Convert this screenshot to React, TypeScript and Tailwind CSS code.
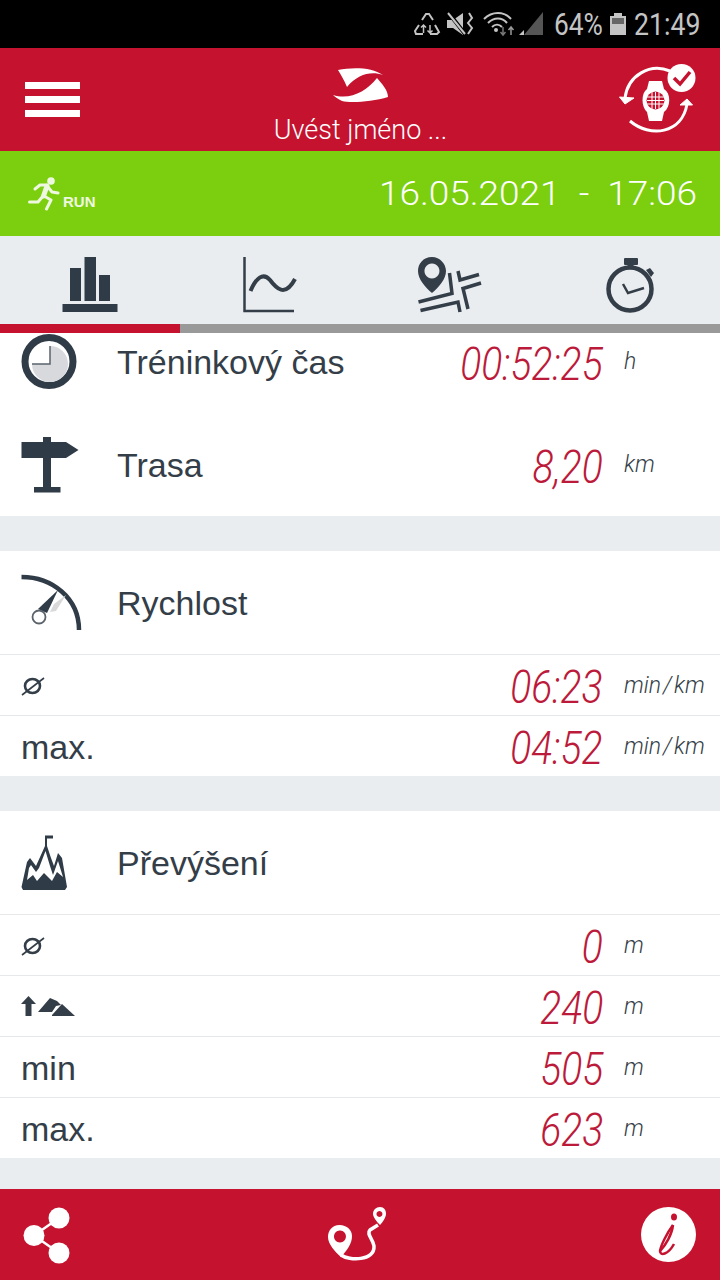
import type { ReactNode } from 'react'

const ARIAL = 'font-["Liberation_Sans",Arial,sans-serif]'

function Diameter() {
  return (
    <svg width="24" height="22" viewBox="0 0 24 22" fill="none" stroke="#343e48">
      <ellipse cx="11.5" cy="11" rx="7.5" ry="7" strokeWidth="2.6" />
      <path d="M1 20 L23 3" strokeWidth="1.6" />
    </svg>
  )
}

function Climb() {
  return (
    <svg width="56" height="22" viewBox="21 996 56 22" fill="#343e48">
      <path d="M28.500 996 L36 1004 L31.500 1004 L31.500 1016 L25.500 1016 L25.500 1004 L21 1004 Z" />
      <path d="M38 1012 L50 998 L57 1001 L61 1005 L56 1006 L52 1012 Z" />
      <path d="M52 1015 L62 1004 L75 1016 L52 1016 Z" />
    </svg>
  )
}

function ClockIcon() {
  return (
    <svg width="58" height="58" viewBox="21 333 58 58">
      <circle cx="49" cy="361.500" r="24" fill="none" stroke="#2f3b47" strokeWidth="7" />
      <path d="M50 346 A18 18 0 1 1 32 364 L50 364 Z" fill="#d8d9dc" />
      <path d="M50 346 L50 364 L32 364" fill="none" stroke="#5a636c" strokeWidth="1.500" />
    </svg>
  )
}

function SignIcon() {
  return (
    <svg width="58" height="56" viewBox="21 437 58 56" fill="#2f3b47">
      <path d="M43 437 H51 V442 H66 L78.500 450 L66 458 H51 V487 H60.500 V492.500 H34 V487 H43 V458 H21.500 V442 H43 Z" />
    </svg>
  )
}

function GaugeIcon() {
  return (
    <svg width="62" height="58" viewBox="21 574 62 58" fill="none">
      <path d="M21.500 577 C52 577 79 598 79 630" stroke="#2f3b47" strokeWidth="4.500" />
      <path d="M58 590 L38 609 L47 613 Z" fill="#2f3b47" />
      <path d="M66 595 L54 604 L50 612 L56 611 Z" fill="#d9d9d9" />
      <circle cx="39" cy="617" r="6.500" fill="#fff" stroke="#5a636c" strokeWidth="1.800" />
    </svg>
  )
}

function PeakIcon() {
  return (
    <svg width="48" height="56" viewBox="21 835 48 56" fill="#2f3b47">
      <path d="M45 835.500 H53 V838.500 H47 V846 L51 858 L54 866 L58 853 L62 858 L67 887 L65 890 H23 L21.500 887 L27 862 L30 858 L36 866 L45 846 Z" />
      <path d="M29 868 L31 865 L36 872 L39 868 L45.500 851 L50 866 L53 875 L58 861 L63 877 L57 872 L52 881 L44 873 L37 881 L33 875 L27 880 Z" fill="#fff" />
    </svg>
  )
}

function Value({ text }: { text: string }) {
  return (
    <div className="mr-[21px] flex-1 pt-[4px] text-right">
      <span className='inline-block origin-right scale-x-[0.85] whitespace-nowrap text-[46px] italic leading-none font-light text-[#bc1a3a] font-["Roboto",sans-serif]'>
        {text}
      </span>
    </div>
  )
}

function Unit({ unit }: { unit: string }) {
  return (
    <span className='w-[96px] shrink-0 pt-[2px] text-[23px] italic font-light text-[#343e48] font-["Roboto",sans-serif]'>
      {unit === 'min/km' ? (
        <>
          min<span className="mx-[2px]">/</span>km
        </>
      ) : (
        unit
      )}
    </span>
  )
}

type Row = { icon?: ReactNode; label?: string; value: string; unit: string }

function StatRow({ icon, label, value, unit }: Row) {
  return (
    <div className="flex h-[61px] items-center border-t border-[#e7e8ea] pl-[21px]">
      <div className={`flex w-[96px] shrink-0 items-center pt-[2px] text-[34px] text-[#343e48] ${ARIAL}`}>
        {label ? <span className="whitespace-nowrap">{label}</span> : icon}
      </div>
      <Value text={value} />
      <Unit unit={unit} />
    </div>
  )
}

function SectionHead({ icon, label, value, unit }: { icon: ReactNode; label: string; value?: string; unit?: string }) {
  return (
    <div className="flex h-[103px] items-center pl-[21px]">
      <div className="flex w-[96px] shrink-0 items-center">{icon}</div>
      <span className={`whitespace-nowrap pt-[2px] text-[34px] text-[#343e48] ${ARIAL}`}>{label}</span>
      {value ? (
        <>
          <Value text={value} />
          <Unit unit={unit ?? ''} />
        </>
      ) : null}
    </div>
  )
}

function StatusBar() {
  return (
    <div className='flex h-[48px] items-center justify-end bg-black pr-[20px] text-[31px] leading-none text-[#c4c4c4] font-["Roboto",sans-serif]'>
      <svg width="130" height="26" viewBox="415 11 130 26" fill="none" className="mr-[10px]">
        <g stroke="#c4c4c4" strokeWidth="2">
          <path d="M423 20 L427 14 H430 L434 20 M436 25 L440 32 L438 34 H431 M424 34 H417 L416 31 L420 25" />
          <path d="M424.500 33 V25 M422 27.500 L424.500 25 L427 27.500 M431 33 V25 M428.500 30.500 L431 33 L433.500 30.500" strokeWidth="1.500" />
        </g>
        <path d="M448 20 H454 L464 13 V35 L454 28 H448 Z" fill="#c4c4c4" />
        <path d="M449 12 L466 34" stroke="#000" strokeWidth="4" />
        <path d="M449 13 L466 34" stroke="#c4c4c4" strokeWidth="2" />
        <path d="M470 13 L473 18 L469 23 L473 28 L469 34" stroke="#c4c4c4" strokeWidth="2" />
        <g stroke="#c4c4c4" strokeWidth="2">
          <path d="M485 19 C493 11 505 11 512 19" />
          <path d="M489 23 C495 17 503 17 508 23" />
          <path d="M493 27 C496 24 500 24 503 27" />
        </g>
        <circle cx="497" cy="30" r="2" fill="#c4c4c4" />
        <path d="M504 27 V35 M501.500 32 L504 35 L506.500 32" stroke="#777" strokeWidth="1.500" />
        <path d="M512 35 V27 M509.500 30 L512 27 L514.500 30" stroke="#999" strokeWidth="1.500" />
        <path d="M544 12 V35 H525 Z" fill="#555" />
        <path d="M520 35 L525 30 V35 Z" fill="#c4c4c4" />
      </svg>
      <span className="inline-block w-[47px] origin-left scale-x-[0.85] whitespace-nowrap">64%</span>
      <svg width="16" height="23" viewBox="610 13 16 23" className="ml-[9px] mr-[8px]">
        <path d="M610 16 H614 V13 H622 V16 H626 V35 H610 Z" fill="#c4c4c4" />
        <rect x="612" y="18" width="12" height="6" fill="#666" />
      </svg>
      <span className="inline-block w-[66px] origin-left scale-x-[0.86] whitespace-nowrap">21:49</span>
    </div>
  )
}

function WatchSync() {
  return (
    <svg width="78" height="72" viewBox="618 63 78 72" fill="none" stroke="#fff">
      <path d="M670 70 C650 62 628 74 625 97" strokeWidth="3" />
      <path d="M619.500 96 L634 97 L625 103 Z" fill="#fff" strokeWidth="1" />
      <path d="M630 120 C650 137 682 133 687 103" strokeWidth="3" />
      <path d="M680 104 L687 98 L692.500 104 Z" fill="#fff" strokeWidth="1" />
      <path d="M649 80 H662 L664 88 C671 92 671 106 664 111 L662 120 H649 L647 111 C641 106 641 92 647 88 Z" fill="#fff" stroke="none" />
      <circle cx="655.500" cy="99.500" r="9" fill="#c5122f" stroke="none" />
      <path d="M647 96 H664 M647 99.500 H664 M647 103 H664 M652 91 V108 M655.500 91 V108 M659 91 V108" stroke="#fff" strokeWidth="1" />
      <circle cx="681.500" cy="77" r="14" fill="#fff" stroke="none" />
      <path d="M674 77 L680 83 L690 71" stroke="#c5122f" strokeWidth="3.500" />
    </svg>
  )
}

function Logo() {
  return (
    <svg width="56" height="36" viewBox="333 67 56 36" fill="#fff">
      <path d="M338 70 C352 67 372 67 383 75 C371 71 358 74 347 87 C344 80 341 75 338 70 Z" />
      <path d="M333 95 C350 100 366 92 377 78 C382 84 388 90 388 97 C372 102 350 103 342 101 C338 99 335 97 333 95 Z" />
    </svg>
  )
}

function Runner() {
  return (
    <svg width="32" height="34" viewBox="28 175 32 34" fill="none" stroke="#eef8e0" strokeWidth="3" strokeLinecap="round" strokeLinejoin="round">
      <circle cx="51" cy="179" r="3.800" fill="#eef8e0" stroke="none" />
      <path d="M47 184 L43.500 194" strokeWidth="5" />
      <path d="M47 183 L40 183 L35 187" />
      <path d="M48 185 L52 190 L58 191" />
      <path d="M43 194 L38 200 L29.500 200" />
      <path d="M44 194 L51 198 L46.500 207" />
    </svg>
  )
}

function Tabs() {
  return (
    <div className="grid h-[88px] grid-cols-4 items-center bg-[#e9edf0] pt-[9px]">
      <div className="flex justify-center">
        <svg width="58" height="56" viewBox="61 257 58 56" fill="#2f3b47">
          <rect x="70" y="268" width="11" height="33" />
          <rect x="84.500" y="257" width="11.500" height="44" />
          <rect x="99" y="275" width="11" height="26" />
          <rect x="62.500" y="304" width="55" height="8" />
        </svg>
      </div>
      <div className="flex justify-center">
        <svg width="56" height="56" viewBox="242 257 56 56" fill="none" stroke="#343e48">
          <path d="M244.500 257 V311 H294" strokeWidth="2.500" />
          <path d="M250.500 291 C256 278 263 272 270 280 C276 288 285 298 295 279" strokeWidth="4" />
        </svg>
      </div>
      <div className="flex justify-center">
        <svg width="66" height="56" viewBox="417 257 66 56" fill="none" stroke="#343e48">
          <path fillRule="evenodd" d="M432 257 C423 257 418 264 418 271 C418 279 425 287 432 293 C439 287 446 279 446 271 C446 264 440 257 432 257 Z M432 263.500 A7.500 7.500 0 1 1 431.900 263.500 Z" fill="#343e48" stroke="none" />
          <path d="M418.500 302 L452 293.500 L449.500 273" strokeWidth="3.500" />
          <path d="M420.500 310.500 L458 302 L460 312" strokeWidth="3.500" />
          <path d="M458 271 L460 280 L479 274.500" strokeWidth="3.500" />
          <path d="M481 283 L463 288.500 L468 309" strokeWidth="3.500" />
        </svg>
      </div>
      <div className="flex justify-center">
        <svg width="50" height="56" viewBox="605 256 50 56" fill="none" stroke="#343e48">
          <rect x="624" y="257" width="14" height="7" rx="1" fill="#343e48" stroke="none" />
          <rect x="627.500" y="263" width="6" height="5" fill="#343e48" stroke="none" />
          <path d="M646 269 L650 267 L654 272 L651 276 Z" fill="#343e48" stroke="none" />
          <circle cx="630" cy="288" r="21.500" strokeWidth="4.500" />
          <path d="M623 283 L628 292 L644 287" strokeWidth="2.500" />
        </svg>
      </div>
    </div>
  )
}

export default function App() {
  return (
    <div className="flex h-[1280px] w-[720px] flex-col overflow-hidden bg-[#e9edf0]">
      <StatusBar />

      {/* Header */}
      <div className="flex h-[103px] items-center bg-[#c5122f] pl-[25px] pr-[24px]">
        <div className="flex-1">
          <div className="flex w-[55px] flex-col gap-[7px]">
            <div className="h-[7px] bg-white" />
            <div className="h-[7px] bg-white" />
            <div className="h-[7px] bg-white" />
          </div>
        </div>
        <div className="flex flex-col items-center self-start pt-[19px]">
          <Logo />
          <span className='mt-[9px] text-[27px] leading-[36px] whitespace-nowrap font-light text-white font-["Roboto",sans-serif]'>Uvést jméno ...</span>
        </div>
        <div className="flex flex-1 justify-end">
          <WatchSync />
        </div>
      </div>

      {/* Activity */}
      <div className="flex h-[85px] items-center justify-between bg-[#7ccf0e] pl-[28px] pr-[23px] text-white">
        <div className="flex items-end">
          <Runner />
          <span className={`mb-[-3px] ml-[3px] text-[15px] font-bold text-[#eef8e0] ${ARIAL}`}>RUN</span>
        </div>
        <span className='origin-right scale-x-[1.12] whitespace-pre text-[33px] font-light font-["Roboto",sans-serif]'>16.05.2021  -  17:06</span>
      </div>

      <Tabs />

      <div className="flex h-[9px] bg-[#999999]">
        <div className="w-[180px] bg-[#c5122f]" />
      </div>

      <div className="flex-1 overflow-hidden">
        <div className="-mt-[23px] bg-white">
          <SectionHead icon={<ClockIcon />} label="Tréninkový čas" value="00:52:25" unit="h" />
          <SectionHead icon={<SignIcon />} label="Trasa" value="8,20" unit="km" />
        </div>
        <div className="mt-[35px] bg-white">
          <SectionHead icon={<GaugeIcon />} label="Rychlost" />
          <StatRow icon={<Diameter />} value="06:23" unit="min/km" />
          <StatRow label="max." value="04:52" unit="min/km" />
        </div>
        <div className="mt-[35px] bg-white">
          <SectionHead icon={<PeakIcon />} label="Převýšení" />
          <StatRow icon={<Diameter />} value="0" unit="m" />
          <StatRow icon={<Climb />} value="240" unit="m" />
          <StatRow label="min" value="505" unit="m" />
          <StatRow label="max." value="623" unit="m" />
        </div>
      </div>

      {/* Bottom bar */}
      <div className="flex h-[91px] items-center justify-between bg-[#c5122f] pl-[23px] pr-[23px]">
        <svg width="50" height="58" viewBox="23 1205 50 58" fill="#fff">
          <circle cx="59" cy="1217" r="10.500" />
          <circle cx="34" cy="1234.500" r="10.500" />
          <circle cx="59" cy="1252" r="10.500" />
          <path d="M59 1217 L34 1234.500 L59 1252" fill="none" stroke="#fff" strokeWidth="2.500" />
        </svg>
        <svg width="60" height="58" viewBox="326 1205 60 58" fill="none" stroke="#fff">
          <path fillRule="evenodd" d="M338.500 1224 C331 1224 327 1230 327 1236 C327 1243 334 1251 340 1256 C346 1249 351 1243 351 1235 C351 1229 346 1224 338.500 1224 Z M339 1229.500 A6 6 0 1 1 338.900 1229.500 Z" fill="#fff" stroke="none" />
          <path fillRule="evenodd" d="M379 1206 C375 1206 372 1209 372 1213 C372 1216 376 1221 379 1224 C382 1221 385 1216 385 1213 C385 1209 383 1206 379 1206 Z M378.500 1210 A3 3 0 1 1 378.400 1210 Z" fill="#fff" stroke="none" />
          <path d="M340 1254 C348 1260 374 1260 373 1245 C372 1238 365 1233 369 1229 L377 1224" strokeWidth="3.500" />
        </svg>
        <svg width="56" height="56" viewBox="641 1207 56 56">
          <circle cx="668.500" cy="1234.500" r="27.500" fill="#fff" />
          <ellipse cx="674" cy="1217" rx="3" ry="3.500" fill="#c5122f" />
          <path d="M673 1225 C667 1233 661 1245 660 1251 C660 1256 668 1255 674 1244" fill="none" stroke="#c5122f" strokeWidth="2.500" />
          <path d="M673 1225 C672 1234 666 1245 660 1251" fill="none" stroke="#c5122f" strokeWidth="2.500" />
        </svg>
      </div>
    </div>
  )
}
